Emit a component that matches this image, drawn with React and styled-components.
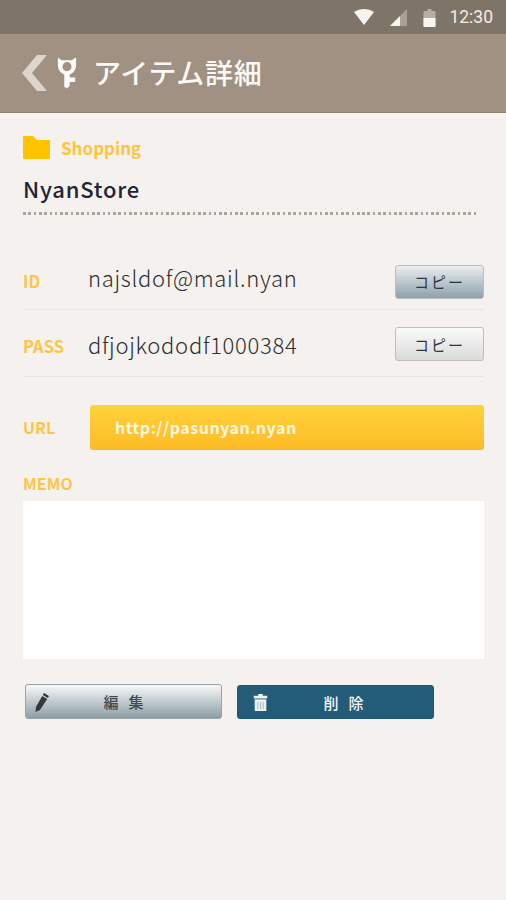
import React from 'react'
import styled, { createGlobalStyle } from 'styled-components'

const GlobalStyle = createGlobalStyle`
  html, body {
    margin: 0;
    padding: 0;
    background: #f5f1ee;
  }
  * {
    box-sizing: border-box;
  }
`

const Page = styled.div`
  width: 506px;
  height: 900px;
  overflow: hidden;
  background: #f5f1ee;
  font-family: "Noto Sans CJK JP", "Noto Sans", sans-serif;
`

const StatusBar = styled.div`
  height: 34px;
  background: #7f7468;
  display: flex;
  align-items: center;
  justify-content: flex-end;
  padding-right: 13px;
  color: #f1eeea;
`

const StatusIcons = styled.div`
  display: flex;
  align-items: center;
  gap: 16px;
  margin-right: 13px;
`

const Clock = styled.span`
  font-family: Roboto, sans-serif;
  font-size: 17.5px;
  line-height: 34px;
`

const Header = styled.div`
  height: 79px;
  background: #a09182;
  border-bottom: 1px solid #8d8072;
  display: flex;
  align-items: center;
  padding-left: 22px;
`

const Title = styled.h1`
  margin: -2px 0 0 16px;
  font-size: 28px;
  font-weight: 500;
  letter-spacing: 0.7px;
  line-height: 40px;
  color: #fbf9f6;
`

const Content = styled.div`
  padding: 21px 22px 0 23px;
`

const CategoryRow = styled.div`
  display: flex;
  align-items: center;
  gap: 11px;
  height: 26px;
`

const CategoryName = styled.span`
  font-size: 17px;
  font-weight: 700;
  color: #fcc540;
`

const ItemName = styled.div`
  margin-top: 12px;
  font-size: 22px;
  font-weight: 500;
  letter-spacing: 0.8px;
  line-height: 32px;
  color: #1e2632;
`

const TitleRule = styled.div`
  margin-top: 8px;
  width: 455px;
  height: 3px;
  background: repeating-linear-gradient(90deg, #aaa69f 0, #aaa69f 2.6px, transparent 2.6px, transparent 5.3px);
`

const Fields = styled.div`
  margin-top: 33px;
`

const FieldRow = styled.div`
  height: ${props => props.$height}px;
  display: flex;
  align-items: center;
  border-bottom: 1px solid #e9e6e2;
`

const FieldLabel = styled.span`
  width: 65px;
  padding-top: 5px;
  font-size: 16.5px;
  font-weight: 700;
  color: #fcc54a;
`

const FieldValue = styled.span`
  flex: 1;
  margin-top: ${props => props.$nudge}px;
  font-size: 22px;
  font-weight: 300;
  letter-spacing: 0.7px;
  line-height: 30px;
  color: #2b2e33;
`

const CopyButton = styled.button`
  width: 89px;
  height: 34px;
  margin-top: ${props => props.$nudge}px;
  padding: 0;
  border: 1px solid ${props => (props.$active ? '#b4bfc5' : '#bdbdb9')};
  border-radius: 3px;
  background: ${props =>
    props.$active
      ? 'linear-gradient(#e9eef0, #8fa1ac)'
      : 'linear-gradient(#fbfbfa, #d9dad9)'};
  font-family: inherit;
  font-size: 15px;
  letter-spacing: 2px;
  color: #30353a;
`

const UrlRow = styled.div`
  margin-top: 27px;
  display: flex;
  align-items: center;
  height: 46px;
`

const UrlLabel = styled(FieldLabel)`
  width: 67px;
  padding-top: 0;
  font-size: 16px;
`

const UrlButton = styled.div`
  flex: 1;
  height: 45px;
  padding-left: 25px;
  display: flex;
  align-items: center;
  border-radius: 3px;
  background: linear-gradient(#ffd33b, #fdbb26);
  font-size: 16px;
  font-weight: 700;
  letter-spacing: 0.5px;
  color: #fdf6e0;
`

const MemoLabel = styled.div`
  margin-top: 21px;
  font-size: 16px;
  font-weight: 700;
  letter-spacing: 0.1px;
  line-height: 24px;
  color: #fcc54a;
`

const MemoBox = styled.div`
  margin-top: 6px;
  height: 158px;
  background: #fff;
`

const Actions = styled.div`
  margin-top: 25px;
  margin-left: 2px;
  display: flex;
  align-items: flex-end;
  gap: 15px;
`

const ActionButton = styled.button`
  position: relative;
  width: 197px;
  height: ${props => (props.$danger ? 34 : 35)}px;
  padding: 0 0 0 ${props => (props.$danger ? 26 : 10)}px;
  border: 1px solid ${props => (props.$danger ? '#1e5570' : '#9ba3a6')};
  border-radius: 3px;
  background: ${props =>
    props.$danger ? '#235c78' : 'linear-gradient(#f7f8f8, #8d9ea6)'};
  font-family: inherit;
  font-size: 15px;
  font-weight: 500;
  letter-spacing: 10px;
  color: ${props => (props.$danger ? '#f4f6f6' : '#44494c')};
`

const ButtonIcon = styled.span`
  position: absolute;
  left: ${props => props.$left}px;
  top: ${props => props.$top}px;
  display: flex;
`

function WifiIcon() {
  return (
    <svg width="20" height="16" viewBox="0 0 20 16">
      <path d="M0 3 C6 -1 14 -1 20 3 L10 16 Z" fill="#f6f4f0" />
    </svg>
  )
}

function SignalIcon() {
  return (
    <svg width="17" height="17" viewBox="0 0 17 17">
      <path d="M0 17 L17 0 V17 Z" fill="#a8a198" />
      <path d="M0 17 L10 7 V17 Z" fill="#f6f4f0" />
    </svg>
  )
}

function BatteryIcon() {
  return (
    <svg width="13" height="19" viewBox="0 0 12 19">
      <path d="M1 3 H4 V1 H8 V3 H11 a1 1 0 0 1 1 1 V18 a1 1 0 0 1 -1 1 H1 a1 1 0 0 1 -1 -1 V4 a1 1 0 0 1 1 -1 Z" fill="#b5aea5" />
      <path d="M0 10 H12 V18 a1 1 0 0 1 -1 1 H1 a1 1 0 0 1 -1 -1 Z" fill="#f6f4f0" />
    </svg>
  )
}

function BackIcon() {
  return (
    <svg width="26" height="36" viewBox="0 0 26 36">
      <path d="M25 0 H15 L0 18 L15 36 H25 L10 18 Z" fill="#dbd5ce" />
    </svg>
  )
}

function KeyIcon() {
  return (
    <svg width="20" height="34" viewBox="0 0 22 36" style={{ marginLeft: 9 }}>
      <path d="M1 1 L5 4 H16 L21 1 V10 A10 10 0 0 1 1 10 Z" fill="#fdfcfa" />
      <circle cx="11" cy="11" r="5" fill="#a09182" />
      <path d="M8 19 H14 V23 H20 V28 H14 V32 L11 35 L8 33 Z" fill="#fdfcfa" />
    </svg>
  )
}

function FolderIcon() {
  return (
    <svg width="27" height="23" viewBox="0 0 27 23">
      <path d="M0 1 a1 1 0 0 1 1 -1 H10 L14 4 H26 a1 1 0 0 1 1 1 V22 a1 1 0 0 1 -1 1 H1 a1 1 0 0 1 -1 -1 Z" fill="#ffc400" />
    </svg>
  )
}

function PencilIcon() {
  return (
    <svg width="14" height="19" viewBox="0 0 14 19">
      <path d="M9 0 L14 3 L12.8 5 L7.8 2 Z M7.2 3 L12.2 6 L5 17 L0.5 19 L1 14 Z" fill="#33383b" />
    </svg>
  )
}

function TrashIcon() {
  return (
    <svg width="15" height="17" viewBox="0 0 15 19">
      <path d="M5 0 H10 V2 H15 V5 H0 V2 H5 Z" fill="#eef1f1" />
      <path d="M1 6 H14 V19 H1 Z" fill="#eef1f1" />
      <path d="M4 9 H5 V17 H4 Z M7 9 H8 V17 H7 Z M10 9 H11 V17 H10 Z" fill="#9fb4bf" />
    </svg>
  )
}

export default function App() {
  return (
    <Page>
      <GlobalStyle />
      <StatusBar>
        <StatusIcons>
          <WifiIcon />
          <SignalIcon />
          <BatteryIcon />
        </StatusIcons>
        <Clock>12:30</Clock>
      </StatusBar>
      <Header>
        <BackIcon />
        <KeyIcon />
        <Title>アイテム詳細</Title>
      </Header>
      <Content>
        <CategoryRow>
          <FolderIcon />
          <CategoryName>Shopping</CategoryName>
        </CategoryRow>
        <ItemName>NyanStore</ItemName>
        <TitleRule />
        <Fields>
          <FieldRow $height={62}>
            <FieldLabel>ID</FieldLabel>
            <FieldValue $nudge={-4}>najsldof@mail.nyan</FieldValue>
            <CopyButton $active $nudge={6}>コピー</CopyButton>
          </FieldRow>
          <FieldRow $height={67}>
            <FieldLabel>PASS</FieldLabel>
            <FieldValue $nudge={2}>dfjojkododf1000384</FieldValue>
            <CopyButton $nudge={2}>コピー</CopyButton>
          </FieldRow>
        </Fields>
        <UrlRow>
          <UrlLabel>URL</UrlLabel>
          <UrlButton>http://pasunyan.nyan</UrlButton>
        </UrlRow>
        <MemoLabel>MEMO</MemoLabel>
        <MemoBox />
        <Actions>
          <ActionButton>
            <ButtonIcon $left={9} $top={8}>
              <PencilIcon />
            </ButtonIcon>
            編集
          </ActionButton>
          <ActionButton $danger>
            <ButtonIcon $left={15} $top={8}>
              <TrashIcon />
            </ButtonIcon>
            削除
          </ActionButton>
        </Actions>
      </Content>
    </Page>
  )
}
